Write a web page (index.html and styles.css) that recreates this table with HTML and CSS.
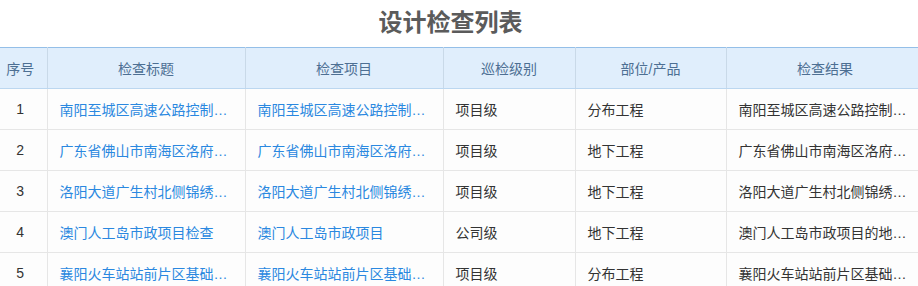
FILE: index.html
```html
<!DOCTYPE html>
<html lang="zh">
<head>
<meta charset="utf-8">
<title>设计检查列表</title>
<link rel="stylesheet" href="styles.css">
</head>
<body>
<div class="page">
  <h1 class="title">设计检查列表</h1>
  <div class="table-wrap">
    <table class="grid">
      <colgroup>
        <col class="c-no"><col class="c-title"><col class="c-item"><col class="c-level"><col class="c-part"><col class="c-result">
      </colgroup>
      <thead>
        <tr><th>序号</th><th>检查标题</th><th>检查项目</th><th>巡检级别</th><th>部位/产品</th><th>检查结果</th></tr>
      </thead>
      <tbody>
        <tr><td class="no">1</td><td class="link">南阳至城区高速公路控制性工程检查</td><td class="link">南阳至城区高速公路控制性工程</td><td>项目级</td><td>分布工程</td><td>南阳至城区高速公路控制性工程检查结果</td></tr>
        <tr><td class="no">2</td><td class="link">广东省佛山市南海区洛府大道检查</td><td class="link">广东省佛山市南海区洛府大道</td><td>项目级</td><td>地下工程</td><td>广东省佛山市南海区洛府大道检查结果</td></tr>
        <tr><td class="no">3</td><td class="link">洛阳大道广生村北侧锦绣路段检查</td><td class="link">洛阳大道广生村北侧锦绣路段工程</td><td>项目级</td><td>地下工程</td><td>洛阳大道广生村北侧锦绣路段检查结果</td></tr>
        <tr><td class="no">4</td><td class="link">澳门人工岛市政项目检查</td><td class="link">澳门人工岛市政项目</td><td>公司级</td><td>地下工程</td><td>澳门人工岛市政项目的地下工程检查结果</td></tr>
        <tr><td class="no">5</td><td class="link">襄阳火车站站前片区基础设施检查</td><td class="link">襄阳火车站站前片区基础设施</td><td>项目级</td><td>分布工程</td><td>襄阳火车站站前片区基础设施检查结果</td></tr>
      </tbody>
    </table>
  </div>
</div>
</body>
</html>
```
FILE: styles.css
```css
html, body {
  margin: 0;
  padding: 0;
  background: #ffffff;
}
body {
  font-family: "Liberation Sans", "Noto Sans CJK SC", sans-serif;
  font-size: 14px;
  color: #333333;
  overflow: hidden;
}
.page {
  width: 918px;
}
.title {
  margin: 0;
  height: 47px;
  line-height: 42px;
  padding-right: 17px;
  text-align: center;
  font-size: 24px;
  font-weight: bold;
  color: #5b5b5b;
  font-family: "Noto Sans CJK SC", "Liberation Sans", sans-serif;
}
.table-wrap {
  overflow: hidden;
  width: 918px;
}
.grid {
  margin-left: -6px;
  width: 930px;
  table-layout: fixed;
  border-collapse: collapse;
  background: #fdfdfd;
}
.c-no { width: 53px; }
.c-title { width: 198px; }
.c-item { width: 198px; }
.c-level { width: 132px; }
.c-part { width: 151px; }
.c-result { width: 198px; }

.grid th {
  height: 40px;
  padding: 0 12px;
  background: #e0eefc;
  color: #4d6f93;
  font-weight: normal;
  text-align: center;
  border-top: 1px solid #94bfe8;
  border-bottom: 1px solid #bcd7f0;
  border-left: 1px solid #c9d9e8;
  border-right: 1px solid #c9d9e8;
  white-space: nowrap;
}
.grid th:first-child { border-left: none; }
.grid td {
  height: 40px;
  padding: 0 12px;
  border: 1px solid #e6e6e6;
  white-space: nowrap;
  overflow: hidden;
  text-overflow: ellipsis;
  color: #333333;
}
.grid td:first-child { border-left: none; }
.grid td.no { text-align: center; }
.grid td.link { color: #2a88e0; }
```
